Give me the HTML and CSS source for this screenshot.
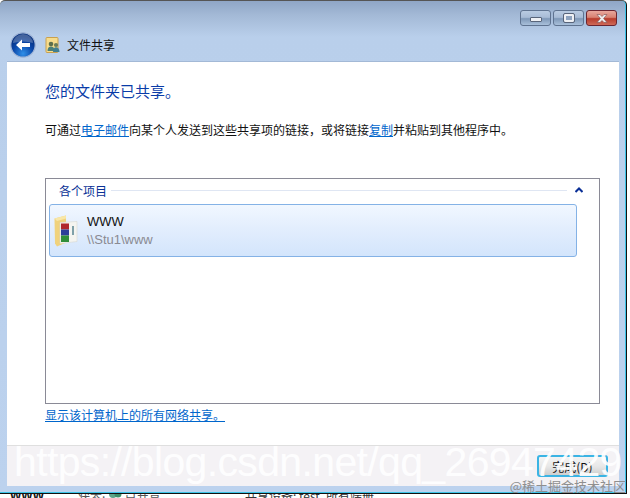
FILE: index.html
```html
<!DOCTYPE html>
<html lang="zh-CN">
  <head>
    <meta charset="UTF-8" />
    <meta name="viewport" content="width=device-width, initial-scale=1.0" />
    <title>文件共享</title>
    <link rel="stylesheet" href="styles.css">
  </head>
  <body>
    <div class="window">
      <div class="controls">
        <div class="ctl"><span class="min-glyph"></span></div>
        <div class="ctl"><span class="max-glyph"></span></div>
        <div class="ctl close">
          <svg width="18" height="11" viewBox="0 0 18 11">
            <path d="M4 1.5h3l2 2 2-2h3l-3.4 4 3.4 4h-3l-2-2-2 2H4l3.4-4z" fill="#eee" stroke="#8a5a5a" stroke-width="0.7" />
          </svg>
        </div>
      </div>

      <div class="nav">
        <svg class="back" width="26" height="26" viewBox="0 0 26 26">
          <defs>
            <radialGradient id="backfill" cx="50%" cy="85%" r="70%">
              <stop offset="0" stop-color="#2f8fe8" />
              <stop offset="0.6" stop-color="#0a46a8" />
              <stop offset="1" stop-color="#06307e" />
            </radialGradient>
          </defs>
          <circle cx="13" cy="13" r="12.2" fill="url(#backfill)" stroke="#9fb4d6" stroke-width="1.2" />
          <path d="M3 11a10 9 0 0 1 20 0q-10-3-20 0z" fill="#fff" opacity="0.25" />
          <path d="M6 13l6-5.5v3.4h8v4.2h-8v3.4z" fill="#fff" />
        </svg>
        <svg class="share-icon" width="16" height="16" viewBox="0 0 16 16">
          <rect x="1" y="0.5" width="12" height="15" rx="1" fill="#f6dc8c" stroke="#c9a04e" />
          <circle cx="6" cy="7" r="2.3" fill="#5d6f4c" />
          <path d="M2.5 14c0-3 1.5-4.4 3.5-4.4s3.5 1.4 3.5 4.4z" fill="#4c7f78" />
          <circle cx="11" cy="8" r="2.1" fill="#6b7c58" />
          <path d="M8 15c0-3 1.2-4.8 3-4.8s3.5 1.6 3.5 4.8z" fill="#3f7f92" />
        </svg>
        <span class="nav-title">文件共享</span>
      </div>

      <div class="content">
        <div class="main">
          <h1 class="heading">您的文件夹已共享。</h1>
          <p class="intro">可通过<a class="link" href="#">电子邮件</a>向某个人发送到这些共享项的链接，或将链接<a class="link" href="#">复制</a>并粘贴到其他程序中。</p>

          <div class="panel">
            <div class="group-head">
              <span class="group-name">各个项目</span>
              <span class="group-line"></span>
              <svg width="8" height="6" viewBox="0 0 8 6">
                <path d="M0.5 5L4 1.5 7.5 5" fill="none" stroke="#0a2f96" stroke-width="2" />
              </svg>
            </div>
            <div class="item">
              <svg class="item-icon" width="24" height="32" viewBox="0 0 24 32">
                <path d="M0.5 3.5L12 0.5v27l-9 4-2-3z" fill="#f0d27c" />
                <path d="M0.5 3.5L12 0.5v3L3 6z" fill="#f8e7a8" />
                <path d="M6 7.5l17-1v20l-17 2z" fill="#f4f4f0" stroke="#d9d9d0" stroke-width="0.6" />
                <path d="M7 8.5h8v6H7z" fill="#b0272c" />
                <path d="M7 14.5h8v6H7z" fill="#2c3f9a" />
                <path d="M7 20.5h8v6.5H7z" fill="#2f8f3a" />
                <rect x="18" y="11" width="2" height="9" fill="#7fa0a8" />
              </svg>
              <div class="item-text">
                <div class="item-name">WWW</div>
                <div class="item-path">\\Stu1\www</div>
              </div>
            </div>
          </div>

          <a class="link all-shares" href="#">显示该计算机上的所有网络共享。</a>
        </div>

        <div class="footer">
          <button class="done">完成(D)</button>
        </div>
      </div>
    </div>

    <div class="behind">
      <span class="behind-name">WWW</span>
      <span class="behind-status">状态:
        <svg width="14" height="14" viewBox="0 0 14 14">
          <circle cx="5" cy="5" r="4" fill="#5fa58a" />
          <circle cx="10" cy="5" r="3.5" fill="#3f8f6a" />
        </svg>
        已共享</span>
      <span class="behind-device">共享设备: test, 所有端册</span>
    </div>

    <div class="watermark">https://blog.csdn.net/qq_26947429</div>
    <div class="stamp">@稀土掘金技术社区</div>
  </body>
</html>
```

FILE: styles.css
```css
html,
body {
  height: 100%;
}
body {
  font-family: "Noto Sans CJK SC", "Liberation Sans", sans-serif;
  font-size: 12px;
  margin: 0;
  padding: 0;
  background: #fff;
  color: #111;
  overflow: hidden;
  position: relative;
}
.window {
  width: 627px;
  height: 494px;
  box-sizing: border-box;
  padding: 0 7px 7px 7px;
  background: linear-gradient(#8fa6c6 0, #a3b9d6 14px, #b9cfeb 36px, #bcd2ee 100%);
  border-top: 1px solid #555;
  border-right: 1px solid #111;
  border-bottom: 1px solid #111;
  border-radius: 5px 5px 0 0;
  box-shadow: inset 0 -1px 0 #3cc4e8, inset -1px 0 0 #3cc4e8;
  display: flex;
  flex-direction: column;
}
.controls {
  height: 18px;
  display: flex;
  justify-content: flex-end;
  gap: 2px;
  padding-top: 9px;
  margin-right: 2px;
}
.ctl {
  width: 31px;
  height: 16px;
  box-sizing: border-box;
  border: 1px solid #5f7390;
  border-radius: 3px;
  background: linear-gradient(#b9cbe2 0, #a8bcd6 45%, #7f98b8 55%, #a9c0da 100%);
  display: flex;
  align-items: center;
  justify-content: center;
}
.close {
  border-color: #6b2530;
  background: linear-gradient(#e8a79c 0, #d98272 45%, #b83c2c 55%, #cf6a58 100%);
}
.min-glyph {
  width: 10px;
  height: 3px;
  margin-top: 3px;
  background: #eef0f4;
  border: 1px solid #59657a;
  border-radius: 1px;
}
.max-glyph {
  width: 6px;
  height: 4px;
  background: #8ea3bf;
  border: 2px solid #eef0f4;
  outline: 1px solid #59657a;
  border-radius: 1px;
}
.nav {
  height: 33px;
  display: flex;
  align-items: center;
}
.back {
  margin-left: 3px;
}
.share-icon {
  margin-left: 9px;
}
.nav-title {
  margin-left: 6px;
  font-size: 12px;
  color: #111;
}
.content {
  flex: 1;
  background: #fff;
  border-top: 1px solid #a3b9d6;
  display: flex;
  flex-direction: column;
}
.main {
  flex: 1;
  padding: 0 19px 0 38px;
}
.heading {
  margin: 18px 0 0;
  font-size: 15px;
  line-height: 22px;
  font-weight: normal;
  color: #0a3ca8;
}
.intro {
  margin: 19px 0 0;
  font-size: 12px;
  line-height: 18px;
  white-space: nowrap;
}
.link {
  color: #0066cc;
  text-decoration: underline;
}
.panel {
  height: 226px;
  box-sizing: border-box;
  margin-top: 39px;
  border: 1px solid #8a8a96;
  padding: 0 3px;
}
.group-head {
  height: 22px;
  display: flex;
  align-items: center;
  padding: 0 13px 3px 10px;
}
.group-name {
  color: #0a3296;
  font-size: 12px;
  margin-right: 4px;
}
.group-line {
  flex: 1;
  height: 1px;
  background: #dfe6f3;
  margin-right: 8px;
}
.item {
  width: 528px;
  height: 53px;
  box-sizing: border-box;
  border: 1px solid #84b2e6;
  border-radius: 3px;
  background: linear-gradient(#f1f7ff 0, #e3eefd 45%, #d3e5fc 100%);
  display: flex;
  align-items: center;
  padding-left: 4px;
}
.item-text {
  margin-left: 9px;
}
.item-name {
  font-family: "Liberation Sans", sans-serif;
  font-size: 13px;
  line-height: 16px;
  color: #111;
}
.item-path {
  font-family: "Liberation Sans", sans-serif;
  font-size: 13px;
  line-height: 16px;
  margin-top: 2px;
  color: #8a8a92;
}
.all-shares {
  display: inline-block;
  margin-top: 2px;
  line-height: 17px;
  font-size: 12px;
}
.footer {
  height: 41px;
  box-sizing: border-box;
  background: #f4f2f5;
  border-top: 1px solid #dfdfdf;
  display: flex;
  justify-content: flex-end;
  align-items: flex-start;
  padding: 9px 11px 0 0;
}
.done {
  width: 71px;
  height: 22px;
  box-sizing: border-box;
  padding: 0;
  border: 2px solid #3bb4e4;
  border-radius: 3px;
  background: linear-gradient(#f4f4f4 0, #e8e8e8 50%, #cfcfcf 100%);
  font-family: "Noto Sans CJK SC", sans-serif;
  font-size: 12px;
  color: #111;
}
.behind {
  height: 4px;
  overflow: hidden;
  font-size: 12px;
  line-height: 14px;
  display: flex;
  position: relative;
}
.behind span {
  position: relative;
  top: -5px;
  height: 14px;
}
.behind-name {
  margin-left: 10px;
  width: 68px;
  font-family: "Liberation Sans", sans-serif;
  font-weight: bold;
}
.behind-status {
  width: 167px;
  color: #555;
}
.behind-device {
  color: #333;
}
.watermark {
  position: absolute;
  left: 14px;
  top: 434px;
  font-family: "Liberation Sans", sans-serif;
  font-size: 41px;
  letter-spacing: -0.65px;
  line-height: 56px;
  color: rgba(255, 255, 255, 0.92);
  white-space: nowrap;
}
.stamp {
  position: absolute;
  right: 4px;
  top: 477px;
  font-size: 13px;
  line-height: 17px;
  color: #8f8f8f;
  white-space: nowrap;
}
```
